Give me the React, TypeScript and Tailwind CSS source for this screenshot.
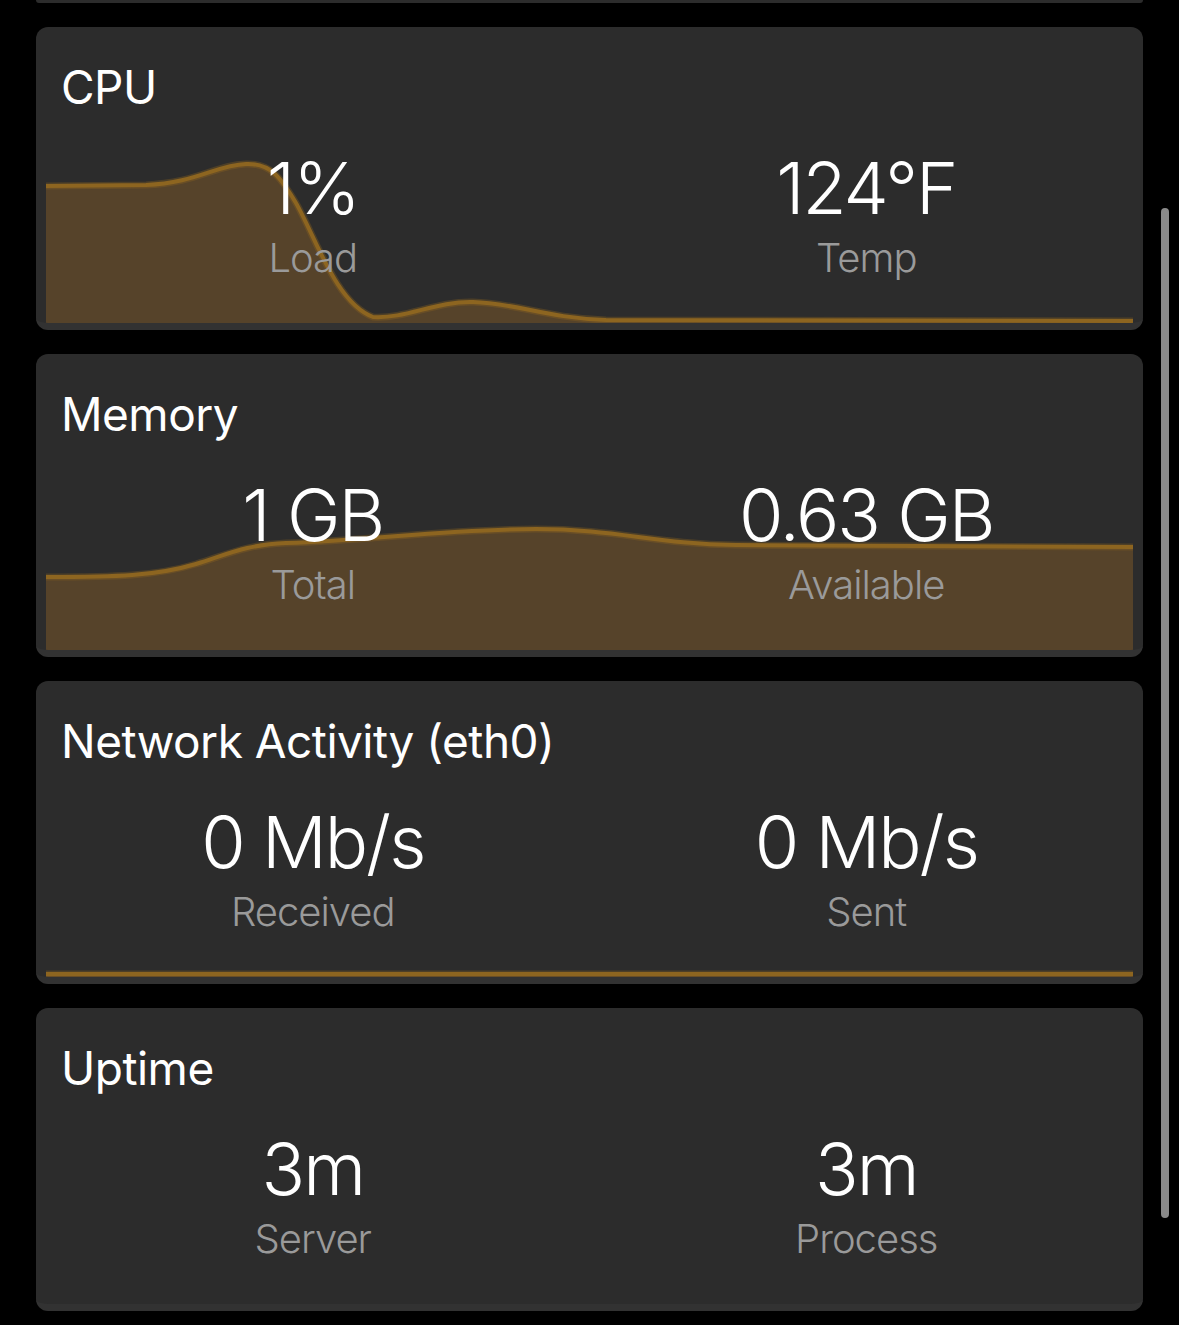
import React from 'react';

type Stat = { value: string; label: string };

type Chart = { height: number; line: string };

const CHART_W = 1087;

const cards: { title: string; stats: Stat[]; chart?: Chart }[] = [
  {
    title: 'CPU',
    stats: [
      { value: '1%', label: 'Load' },
      { value: '124°F', label: 'Temp' },
    ],
    chart: {
      height: 170,
      line: 'M0 33 L100 32 C150 30 170 12 200 11 C225 10 235 25 250 50 C270 85 290 150 327 164 C360 166 390 148 427 149 C470 150 500 165 560 167 L1087 168',
    },
  },
  {
    title: 'Memory',
    stats: [
      { value: '1 GB', label: 'Total' },
      { value: '0.63 GB', label: 'Available' },
    ],
    chart: {
      height: 150,
      line: 'M0 77 C70 77 110 76 150 64 C185 53 200 45 240 43 C330 40 400 29 490 29 C570 29 610 44 690 45 L1087 47',
    },
  },
  {
    title: 'Network Activity (eth0)',
    stats: [
      { value: '0 Mb/s', label: 'Received' },
      { value: '0 Mb/s', label: 'Sent' },
    ],
    chart: { height: 10, line: 'M0 7 L1087 7' },
  },
  {
    title: 'Uptime',
    stats: [
      { value: '3m', label: 'Server' },
      { value: '3m', label: 'Process' },
    ],
  },
];

function AreaChart({ chart }: { chart: Chart }) {
  const h = chart.height;
  return (
    <svg
      className="absolute left-[10px] bottom-0 z-0"
      width={CHART_W}
      height={h}
      viewBox={`0 0 ${CHART_W} ${h}`}
    >
      <path d={`${chart.line} L${CHART_W} ${h} L0 ${h} Z`} fill="#56432a" />
      <path d={chart.line} fill="none" stroke="#8d6520" strokeWidth={7} strokeOpacity={0.35} />
      <path d={chart.line} fill="none" stroke="#8d6520" strokeWidth={4} />
    </svg>
  );
}

function StatCard({ title, stats, chart }: (typeof cards)[number]) {
  return (
    <div className="relative h-[303px] overflow-hidden rounded-xl border-b-[7px] border-[#323232] bg-[#2c2c2c]">
      {chart && <AreaChart chart={chart} />}
      <div className="relative z-10 pt-[32px]">
        <h2 className="pl-[25px] text-[46px] leading-[56px] tracking-[-0.5px] text-white">{title}</h2>
        <div className="mt-[33px] grid grid-cols-2">
          {stats.map((s, i) => (
            <div key={i} className="flex flex-col items-center">
              <span className="text-[72px] leading-[80px] font-light tracking-[-2px] text-white">{s.value}</span>
              <span className="mt-[6px] text-[40px] leading-[48px] font-light tracking-[-1px] text-[#9a9a9a]">
                {s.label}
              </span>
            </div>
          ))}
        </div>
      </div>
    </div>
  );
}

export default function App() {
  return (
    <div
      className="relative h-[1325px] w-[1179px] overflow-hidden bg-black"
      style={{ fontFamily: 'Inter, "Noto Sans", sans-serif' }}
    >
      <div className="mx-[36px] flex flex-col gap-[24px]">
        <div className="h-[3px] rounded-b-xl bg-[#2c2c2c]" />
        {cards.map((c) => (
          <StatCard key={c.title} {...c} />
        ))}
      </div>
      <div className="absolute left-[1161px] top-[208px] h-[1010px] w-[8px] rounded-full bg-[#8a8a8a]" />
    </div>
  );
}
